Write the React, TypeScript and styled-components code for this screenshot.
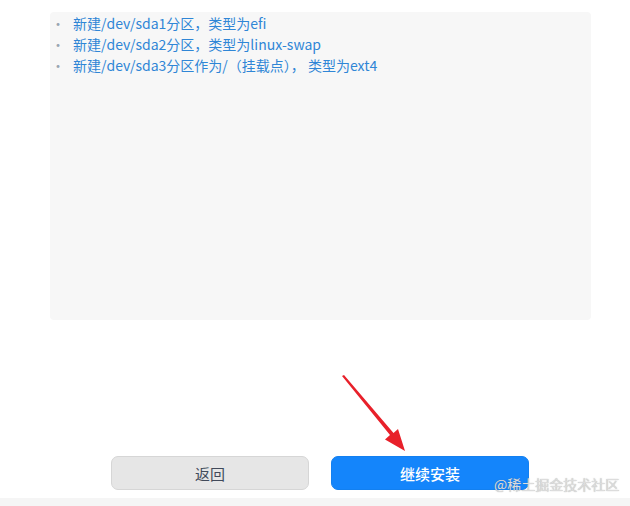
import React from "react";
import styled, { createGlobalStyle } from "styled-components";

const GlobalStyle = createGlobalStyle`
  html, body {
    margin: 0;
    padding: 0;
    background: #ffffff;
  }
  body {
    font-family: "Noto Sans CJK SC", "Noto Sans", sans-serif;
  }
`;

const partitions = [
  "新建/dev/sda1分区，类型为efi",
  "新建/dev/sda2分区，类型为linux-swap",
  "新建/dev/sda3分区作为/（挂载点）， 类型为ext4",
];

const App = () => {
  return (
    <>
      <GlobalStyle />
      <Page>
        <Panel>
          {partitions.map((item) => (
            <Item key={item}>
              <Bullet>·</Bullet>
              <span>{item}</span>
            </Item>
          ))}
        </Panel>
        <Footer>
          <Button>返回</Button>
          <Button primary>继续安装</Button>
        </Footer>
        <BottomStrip />
        <Arrow width="80" height="90" viewBox="0 0 80 90">
          <path d="M1 1 L49 60 L44 64.5 L64 76 L57 54 L52.5 58 L3 0 Z" fill="#e8202a" />
        </Arrow>
        <Watermark>@稀土掘金技术社区</Watermark>
      </Page>
    </>
  );
};

export default App;

const Page = styled.div`
  position: relative;
  display: flex;
  flex-direction: column;
  width: 630px;
  height: 506px;
  overflow: hidden;
`;

const Panel = styled.div`
  margin: 12px 39px 0 50px;
  height: 308px;
  box-sizing: border-box;
  padding: 0 0 0 1px;
  background: #f7f7f7;
  border-radius: 4px;
`;

const Item = styled.div`
  display: flex;
  align-items: center;
  height: 21px;
  font-size: 14px;
  color: #2f86d6;
`;

const Bullet = styled.span`
  width: 22px;
  color: #9aa6b2;
`;

const Footer = styled.div`
  display: flex;
  gap: 22px;
  margin-top: auto;
  padding-left: 111px;
`;

const Button = styled.button<{ primary?: boolean }>`
  width: 198px;
  height: 34px;
  box-sizing: border-box;
  border-radius: 7px;
  font-family: "Noto Sans CJK SC", sans-serif;
  font-size: 15px;
  font-weight: ${(p) => (p.primary ? 500 : 400)};
  color: ${(p) => (p.primary ? "#ffffff" : "#414a5a")};
  background: ${(p) => (p.primary ? "#1485fb" : "#e6e6e6")};
  border: 1px solid ${(p) => (p.primary ? "#1380f0" : "#d6d6d6")};
`;

const BottomStrip = styled.div`
  height: 8px;
  margin-top: 8px;
  background: #f5f5f5;
`;

const Arrow = styled.svg`
  position: absolute;
  left: 341px;
  top: 375px;
`;

const Watermark = styled.div`
  position: absolute;
  left: 494px;
  top: 474px;
  font-size: 14px;
  color: #dcdcdc;
  text-shadow: 0 0 1px rgba(110, 110, 110, 0.6);
`;
